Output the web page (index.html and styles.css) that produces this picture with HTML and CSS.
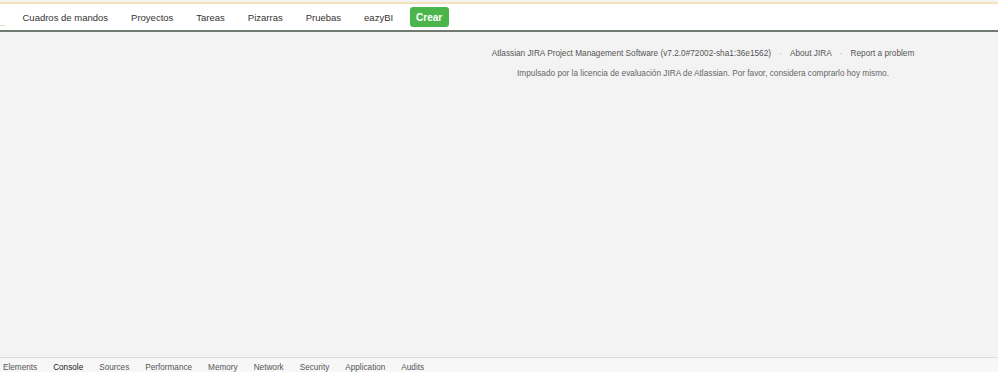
FILE: index.html
```html
<!DOCTYPE html>
<html lang="es">
<head>
  <meta charset="UTF-8" />
  <title>JIRA</title>
  <link rel="stylesheet" href="styles.css">
</head>
<body>
  <div class="page">
    <header class="header">
      <span class="logo-mark"></span>
      <nav class="nav">
        <a class="nav-item">Cuadros de mandos</a>
        <a class="nav-item">Proyectos</a>
        <a class="nav-item">Tareas</a>
        <a class="nav-item">Pizarras</a>
        <a class="nav-item">Pruebas</a>
        <a class="nav-item">eazyBI</a>
        <button class="btn-create">Crear</button>
      </nav>
    </header>

    <main class="content">
      <div class="footer">
        <div class="footer-links">
          <span>Atlassian JIRA Project Management Software (v7.2.0#72002-sha1:36e1562)</span>
          <span class="dot">·</span>
          <span>About JIRA</span>
          <span class="dot">·</span>
          <span>Report a problem</span>
        </div>
        <div class="footer-note">Impulsado por la licencia de evaluación JIRA de Atlassian. Por favor, considera comprarlo hoy mismo.</div>
      </div>
    </main>

    <div class="devtools">
      <span class="tab">Elements</span>
      <span class="tab active">Console</span>
      <span class="tab">Sources</span>
      <span class="tab">Performance</span>
      <span class="tab">Memory</span>
      <span class="tab">Network</span>
      <span class="tab">Security</span>
      <span class="tab">Application</span>
      <span class="tab">Audits</span>
    </div>
  </div>
</body>
</html>
```

FILE: styles.css
```css
html, body {
  margin: 0;
  padding: 0;
  height: 100%;
}

body {
  font-family: "Liberation Sans", Arial, sans-serif;
  background: #f3f3f3;
}

.page {
  display: flex;
  flex-direction: column;
  height: 372px;
}

.header {
  display: flex;
  align-items: center;
  height: 26px;
  margin-top: 2px;
  border-top: 2px solid #f5e2b8;
  border-bottom: 2px solid #707a70;
  background: #fff;
  position: relative;
}

.logo-mark {
  position: absolute;
  left: 0;
  bottom: 4px;
  width: 5px;
  height: 1px;
  background: #cfe3cf;
}

.nav {
  display: flex;
  align-items: center;
  padding-left: 11px;
}

.nav-item {
  padding: 0 11.5px;
  font-size: 9.5px;
  color: #333;
}

.btn-create {
  margin-left: 5px;
  height: 20px;
  width: 39px;
  padding: 0;
  border: none;
  border-radius: 3px;
  background: #4bb54b;
  color: #fff;
  font-family: inherit;
  font-size: 10px;
  font-weight: bold;
}

.content {
  flex: 1;
}

.footer {
  padding-left: 408px;
  padding-top: 17px;
  text-align: center;
  font-size: 8.25px;
  color: #555;
}

.footer-links .dot {
  color: #999;
  margin: 0 6px;
}

.footer-note {
  margin-top: 11px;
  color: #666;
}

.devtools {
  box-sizing: border-box;
  display: flex;
  align-items: center;
  height: 15px;
  padding: 4px 0 0 3px;
  border-top: 1px solid #dcdcdc;
  background: #f7f7f7;
  font-family: "Liberation Sans", sans-serif;
  font-size: 8.2px;
  color: #555;
}

.tab {
  margin-right: 16px;
}

.tab.active {
  color: #222;
}
```
